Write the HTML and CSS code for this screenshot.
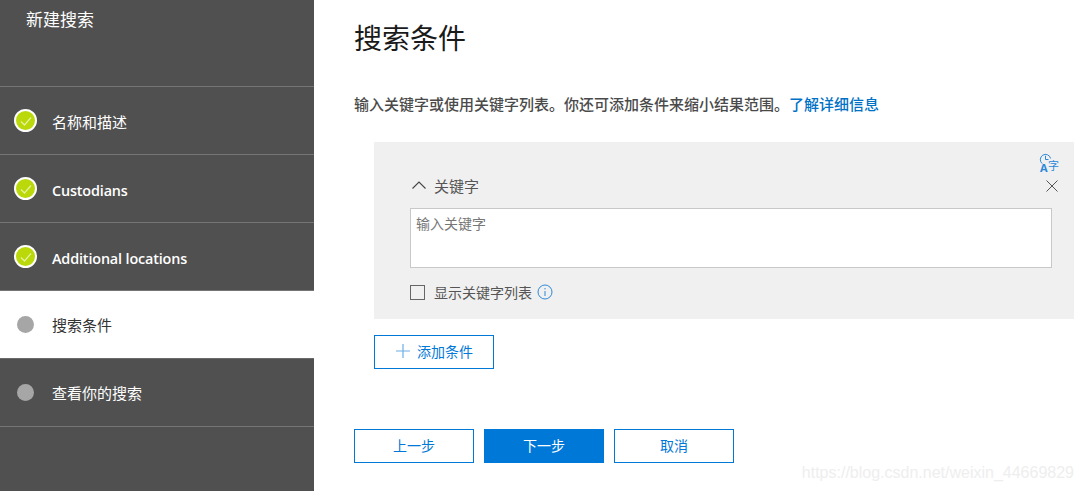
FILE: index.html
```html
<!DOCTYPE html>
<html lang="zh-CN">
<head>
  <meta charset="UTF-8">
  <meta name="viewport" content="width=device-width, initial-scale=1.0">
  <title>新建搜索</title>
  <link rel="stylesheet" href="styles.css">
</head>
<body>
  <div class="sidebar">
    <div class="sidebar-title">新建搜索</div>
    <ul class="steps">
      <li class="step">
        <span class="step-done"><svg width="14" height="14" viewBox="0 0 14 14"><path d="M2 7.5 L5.5 11 L12 3.5" fill="none" stroke="#e4f3a0" stroke-width="1.2"/></svg></span>
        <span class="step-text">名称和描述</span>
      </li>
      <li class="step latin">
        <span class="step-done"><svg width="14" height="14" viewBox="0 0 14 14"><path d="M2 7.5 L5.5 11 L12 3.5" fill="none" stroke="#e4f3a0" stroke-width="1.2"/></svg></span>
        <span class="step-text">Custodians</span>
      </li>
      <li class="step latin">
        <span class="step-done"><svg width="14" height="14" viewBox="0 0 14 14"><path d="M2 7.5 L5.5 11 L12 3.5" fill="none" stroke="#e4f3a0" stroke-width="1.2"/></svg></span>
        <span class="step-text">Additional locations</span>
      </li>
      <li class="step current">
        <span class="step-todo"></span>
        <span>搜索条件</span>
      </li>
      <li class="step">
        <span class="step-todo"></span>
        <span>查看你的搜索</span>
      </li>
    </ul>
  </div>

  <div class="main">
    <h1>搜索条件</h1>
    <p class="intro">输入关键字或使用关键字列表。你还可添加条件来缩小结果范围。<a href="#">了解详细信息</a></p>

    <div class="panel">
      <div class="panel-tools">
        <span class="lang-icon">
          <svg class="lang-clock" width="14" height="12" viewBox="0 0 14 12" fill="none" stroke="#2b88d8" stroke-width="1">
            <path d="M3.2 10.6 A5.2 5.2 0 1 1 11.6 5.5"/>
            <path d="M6.5 2.8 V6.5 H9.5"/>
          </svg>
          <span class="lang-a">A</span>
          <span class="lang-zi">字</span>
        </span>
      </div>
      <div class="keyword-head">
        <svg class="chevron" width="16" height="10" viewBox="0 0 16 10"><path d="M1.5 8.5 L8 2 L14.5 8.5" fill="none" stroke="#444" stroke-width="1.1"/></svg>
        <span class="keyword-label">关键字</span>
        <svg class="close" width="14" height="14" viewBox="0 0 14 14"><path d="M1.5 1.5 L12.5 12.5 M12.5 1.5 L1.5 12.5" fill="none" stroke="#555" stroke-width="1"/></svg>
      </div>
      <textarea class="keyword-input" placeholder="输入关键字"></textarea>
      <div class="list-row">
        <span class="checkbox"></span>
        <span class="list-label">显示关键字列表</span>
        <svg width="16" height="16" viewBox="0 0 16 16" fill="none" stroke="#2b88d8"><circle cx="8" cy="8" r="7"/><path d="M8 7 V12 M8 4 V5.4"/></svg>
      </div>
    </div>

    <button class="btn add-btn">
      <svg width="16" height="16" viewBox="0 0 16 16"><path d="M8 1 V15 M1 8 H15" stroke="#6aaee6" stroke-width="1.2"/></svg>
      添加条件
    </button>

    <div class="actions">
      <button class="btn">上一步</button>
      <button class="btn primary">下一步</button>
      <button class="btn">取消</button>
    </div>
  </div>

  <div class="watermark">https://blog.csdn.net/weixin_44669829</div>
</body>
</html>
```

FILE: styles.css
```css
* { margin: 0; padding: 0; box-sizing: border-box; }

html, body { height: 100%; overflow: hidden; }

body {
  display: flex;
  background: white;
  color: #333;
  font-family: "Open Sans", "Noto Sans CJK SC", sans-serif;
}

.sidebar {
  width: 314px;
  flex: none;
  background: #505050;
  color: white;
}
.sidebar-title {
  height: 86px;
  padding: 8px 0 0 26px;
  font-size: 17px;
  line-height: 24px;
}

.steps { list-style: none; border-top: 1px solid #757575; }
.step {
  display: flex;
  align-items: center;
  height: 68px;
  border-bottom: 1px solid #757575;
  font-size: 15px;
  font-weight: 400;
}
.step-text { padding-top: 2px; }
.step.latin { font-weight: 600; font-size: 14.4px; letter-spacing: -0.15px; }
.step.latin .step-text { padding-top: 4px; }
.step.current { background: white; color: #333; border-bottom-color: #6a6a6a; }

.step-done, .step-todo {
  border-radius: 50%;
  flex: none;
  display: flex;
  align-items: center;
  justify-content: center;
}
.step-done {
  width: 23px;
  height: 23px;
  margin: 0 15px 0 14px;
  background: #bad80a;
  border: 2px solid white;
}
.step-todo {
  width: 17px;
  height: 17px;
  margin: 0 18px 0 17px;
  background: #a6a6a6;
}

.main { flex: 1; padding: 0 9px 0 40px; }

h1 {
  margin-top: 18px;
  font-size: 28px;
  line-height: 40px;
  font-weight: 400;
  color: #1a1a1a;
}
.intro {
  margin-top: 35px;
  font-size: 15px;
  line-height: 22px;
  font-weight: 500;
  color: #4a4a4a;
  white-space: nowrap;
}
.intro a { color: #0072c6; text-decoration: none; }

.panel {
  margin: 27px 0 0 20px;
  height: 177px;
  padding: 9px 22px 0 36px;
  background: #f0f0f0;
}
.panel-tools { display: flex; justify-content: flex-end; height: 21px; margin-right: -7px; }

/* clock + A + 字 sit over each other, so this one icon is positioned */
.lang-icon { position: relative; display: block; width: 20px; height: 21px; color: #2b88d8; }
.lang-clock { position: absolute; left: 0; top: 2px; }
.lang-a { position: absolute; left: 1px; top: 11px; font: bold 11px/11px "Open Sans", sans-serif; }
.lang-zi { position: absolute; left: 9px; top: 8px; font: 11px/12px "Noto Sans CJK SC", sans-serif; }

.keyword-head { display: flex; align-items: center; height: 24px; margin-top: 1px; }
.chevron { margin: 0 7px 0 1px; }
.keyword-label { font-size: 15px; color: #555; }
.close { margin: 2px -7px 0 auto; }

.keyword-input {
  display: block;
  width: 642px;
  height: 60px;
  margin-top: 11px;
  padding: 5px 5px;
  border: 1px solid #c8c8c8;
  background: white;
  font: 14px/18px "Noto Sans CJK SC", sans-serif;
  resize: none;
}
.keyword-input::placeholder { color: #777; }

.list-row { display: flex; align-items: center; height: 20px; margin-top: 14px; }
.checkbox { width: 15px; height: 15px; border: 1px solid #666; margin-right: 9px; }
.list-label { font-size: 14px; color: #555; margin-right: 5px; }

.btn {
  width: 120px;
  height: 34px;
  padding-bottom: 2px;
  border: 1px solid #0078d7;
  background: white;
  color: #0078d7;
  font: 14px "Noto Sans CJK SC", sans-serif;
}
.btn.primary { background: #0078d7; color: white; }

.add-btn {
  display: flex;
  align-items: center;
  gap: 6px;
  margin: 16px 0 0 20px;
  padding-left: 20px;
  font-size: 14px;
}

.actions { display: flex; gap: 10px; margin-top: 60px; }

.watermark {
  position: absolute;
  right: 9px;
  bottom: 9px;
  font: 16px "Liberation Sans", sans-serif;
  color: #eeeeee;
}
```
